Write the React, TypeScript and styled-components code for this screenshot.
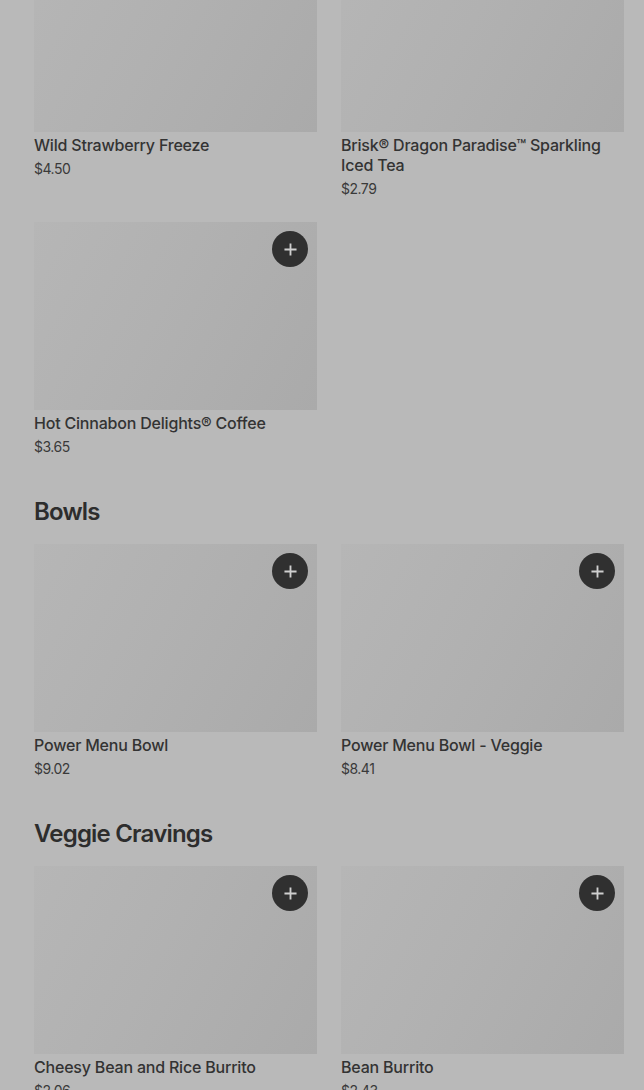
import React from 'react';
import styled, { createGlobalStyle } from 'styled-components';

interface MenuItem {
  name: string;
  price: string;
}

interface MenuSection {
  title?: string;
  items: MenuItem[];
}

const sections: MenuSection[] = [
  {
    items: [
      { name: 'Wild Strawberry Freeze', price: '$4.50' },
      { name: 'Brisk® Dragon Paradise™ Sparkling Iced Tea', price: '$2.79' },
      { name: 'Hot Cinnabon Delights® Coffee', price: '$3.65' },
    ],
  },
  {
    title: 'Bowls',
    items: [
      { name: 'Power Menu Bowl', price: '$9.02' },
      { name: 'Power Menu Bowl - Veggie', price: '$8.41' },
    ],
  },
  {
    title: 'Veggie Cravings',
    items: [
      { name: 'Cheesy Bean and Rice Burrito', price: '$2.06' },
      { name: 'Bean Burrito', price: '$2.43' },
    ],
  },
];

const GlobalStyle = createGlobalStyle`
  html, body {
    margin: 0;
    padding: 0;
    background: #b9b9b9;
    overflow: hidden;
  }
  body {
    font-family: Inter, "Noto Sans", "Liberation Sans", sans-serif;
    color: #2f2f2f;
  }
  * {
    box-sizing: border-box;
  }
`;

const Page = styled.main`
  display: flex;
  flex-direction: column;
  gap: 40px;
  margin-top: -56px;
  padding: 0 20px 0 34px;
`;

const Section = styled.section`
  display: flex;
  flex-direction: column;
`;

const SectionTitle = styled.h2`
  margin: 0 0 16px;
  font-size: 24px;
  line-height: 32px;
  font-weight: 600;
  letter-spacing: -0.8px;
  color: #2d2d2d;
`;

const Grid = styled.div`
  display: grid;
  grid-template-columns: 283px 283px;
  column-gap: 24px;
  row-gap: 24px;
  align-items: start;
`;

const Card = styled.article`
  display: flex;
  flex-direction: column;
`;

const ImageBox = styled.div`
  position: relative;
  height: 188px;
  background: linear-gradient(118deg, #b6b6b6 0%, #b1b1b1 45%, #aaaaaa 100%);
`;

const AddButton = styled.button`
  position: absolute;
  top: 9px;
  right: 9px;
  width: 36px;
  height: 36px;
  padding: 0;
  border: none;
  border-radius: 50%;
  background: #303030;
  display: flex;
  align-items: center;
  justify-content: center;
  cursor: pointer;

  svg {
    width: 13px;
    height: 13px;
  }
`;

const ItemName = styled.h3`
  margin: 3px 0 0;
  font-size: 16px;
  line-height: 20px;
  font-weight: 500;
  letter-spacing: -0.2px;
  color: #333333;
`;

const ItemPrice = styled.span`
  margin-top: 5px;
  font-size: 14px;
  line-height: 18px;
  font-weight: 400;
  color: #3a3a3a;
  letter-spacing: -0.5px;
`;

const PlusIcon = () => (
  <svg viewBox="0 0 14 14" fill="none">
    <path d="M7 1.5v11M1.5 7h11" stroke="#cfcfcf" strokeWidth="2" strokeLinecap="square" />
  </svg>
);

const ItemCard: React.FC<{ item: MenuItem; showAdd: boolean }> = ({ item, showAdd }) => (
  <Card>
    <ImageBox>
      {showAdd && (
        <AddButton aria-label={`Add ${item.name}`}>
          <PlusIcon />
        </AddButton>
      )}
    </ImageBox>
    <ItemName>{item.name}</ItemName>
    <ItemPrice>{item.price}</ItemPrice>
  </Card>
);

const App: React.FC = () => {
  return (
    <>
      <GlobalStyle />
      <Page>
        {sections.map((section, si) => (
          <Section key={si}>
            {section.title && <SectionTitle>{section.title}</SectionTitle>}
            <Grid>
              {section.items.map((item, ii) => (
                // first row of the scrolled section has its buttons off screen
                <ItemCard key={item.name} item={item} showAdd={!(si === 0 && ii < 2)} />
              ))}
            </Grid>
          </Section>
        ))}
      </Page>
    </>
  );
};

export default App;
